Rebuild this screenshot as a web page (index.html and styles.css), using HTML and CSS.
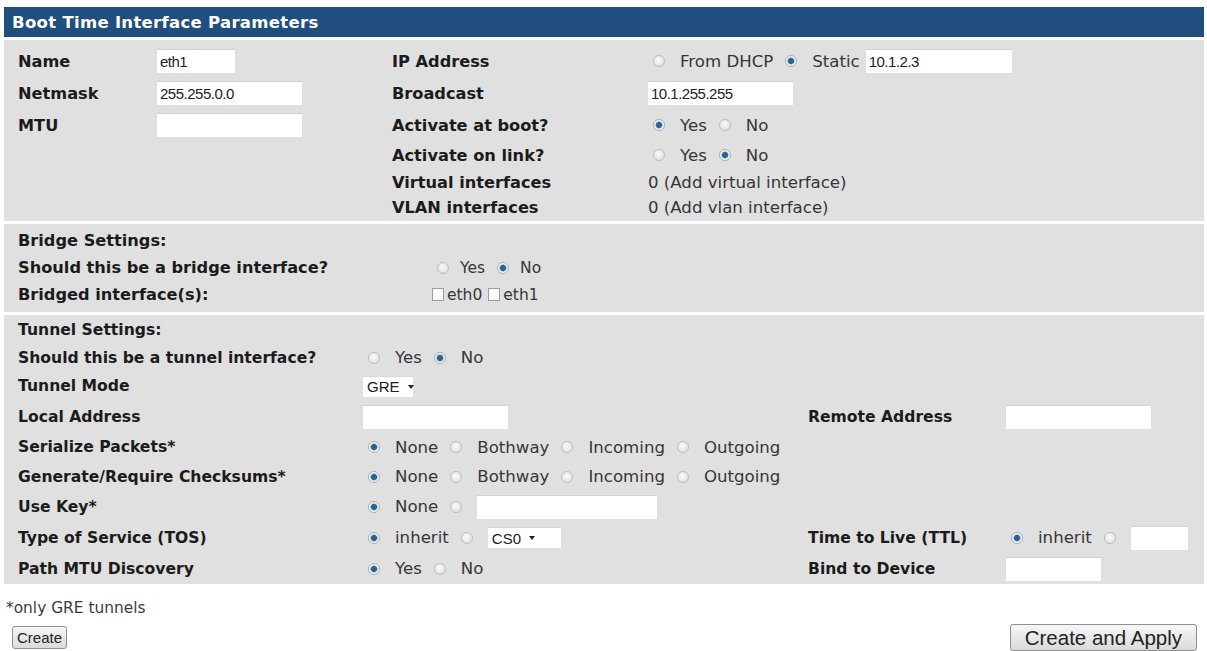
FILE: index.html
```html
<!DOCTYPE html>
<html lang="en">

<head>
	<meta charset="UTF-8">
	<meta name="viewport" content="width=device-width, initial-scale=1.0">
	<title>Boot Time Interface Parameters</title>
	<link rel="stylesheet" href="styles.css">
</head>

<body>
	<form class="page">
		<div class="box">
			<div class="box-title">Boot Time Interface Parameters</div>

			<!-- basic interface settings -->
			<div class="panel panel-main">
				<span class="lbl">Name</span>
				<span><input class="field w-name" type="text" value="eth1"></span>
				<span class="lbl">IP Address</span>
				<span class="val">
					<label class="opt"><input type="radio" name="ip"> From DHCP</label>
					<label class="opt"><input type="radio" name="ip" checked> Static</label>
					<input class="field w-static" type="text" value="10.1.2.3">
				</span>

				<span class="lbl">Netmask</span>
				<span><input class="field w-wide" type="text" value="255.255.0.0"></span>
				<span class="lbl">Broadcast</span>
				<span><input class="field w-wide" type="text" value="10.1.255.255"></span>

				<span class="lbl">MTU</span>
				<span><input class="field w-wide" type="text"></span>
				<span class="lbl">Activate at boot?</span>
				<span class="val">
					<label class="opt"><input type="radio" name="boot" checked> Yes</label>
					<label class="opt"><input type="radio" name="boot"> No</label>
				</span>

				<span></span>
				<span></span>
				<span class="lbl">Activate on link?</span>
				<span class="val">
					<label class="opt"><input type="radio" name="link"> Yes</label>
					<label class="opt"><input type="radio" name="link" checked> No</label>
				</span>

				<span></span>
				<span></span>
				<span class="lbl">Virtual interfaces</span>
				<span class="val text">0 (Add virtual interface)</span>

				<span></span>
				<span></span>
				<span class="lbl">VLAN interfaces</span>
				<span class="val text">0 (Add vlan interface)</span>
			</div>

			<!-- bridge -->
			<div class="panel panel-bridge">
				<span class="lbl">Bridge Settings:</span>
				<span></span>

				<span class="lbl">Should this be a bridge interface?</span>
				<span class="val">
					<label class="opt"><input type="radio" name="bridge"> Yes</label>
					<label class="opt"><input type="radio" name="bridge" checked> No</label>
				</span>

				<span class="lbl">Bridged interface(s):</span>
				<span class="val">
					<label class="chk"><input type="checkbox">eth0</label>
					<label class="chk"><input type="checkbox">eth1</label>
				</span>
			</div>

			<!-- tunnel -->
			<div class="panel panel-tunnel">
				<span class="lbl span-all">Tunnel Settings:</span>

				<span class="lbl">Should this be a tunnel interface?</span>
				<span class="val span-rest">
					<label class="opt"><input type="radio" name="tunnel"> Yes</label>
					<label class="opt"><input type="radio" name="tunnel" checked> No</label>
				</span>

				<span class="lbl">Tunnel Mode</span>
				<span class="val span-rest"><span class="select w-gre">GRE<i class="caret"></i></span></span>

				<span class="lbl">Local Address</span>
				<span><input class="field w-wide" type="text"></span>
				<span class="lbl">Remote Address</span>
				<span><input class="field w-wide" type="text"></span>

				<span class="lbl">Serialize Packets*</span>
				<span class="val span-rest">
					<label class="opt"><input type="radio" name="ser" checked> None</label>
					<label class="opt"><input type="radio" name="ser"> Bothway</label>
					<label class="opt"><input type="radio" name="ser"> Incoming</label>
					<label class="opt"><input type="radio" name="ser"> Outgoing</label>
				</span>

				<span class="lbl">Generate/Require Checksums*</span>
				<span class="val span-rest">
					<label class="opt"><input type="radio" name="csum" checked> None</label>
					<label class="opt"><input type="radio" name="csum"> Bothway</label>
					<label class="opt"><input type="radio" name="csum"> Incoming</label>
					<label class="opt"><input type="radio" name="csum"> Outgoing</label>
				</span>

				<span class="lbl">Use Key*</span>
				<span class="val span-rest">
					<label class="opt"><input type="radio" name="key" checked> None</label>
					<label class="opt"><input type="radio" name="key"></label>
					<input class="field w-key" type="text">
				</span>

				<span class="lbl">Type of Service (TOS)</span>
				<span class="val">
					<label class="opt"><input type="radio" name="tos" checked> inherit</label>
					<label class="opt"><input type="radio" name="tos"></label>
					<span class="select w-cs">CS0<i class="caret"></i></span>
				</span>
				<span class="lbl">Time to Live (TTL)</span>
				<span class="val">
					<label class="opt"><input type="radio" name="ttl" checked> inherit</label>
					<label class="opt"><input type="radio" name="ttl"></label>
					<input class="field w-ttl" type="text">
				</span>

				<span class="lbl">Path MTU Discovery</span>
				<span class="val">
					<label class="opt"><input type="radio" name="pmtu" checked> Yes</label>
					<label class="opt"><input type="radio" name="pmtu"> No</label>
				</span>
				<span class="lbl">Bind to Device</span>
				<span><input class="field w-bind" type="text"></span>
			</div>
		</div>

		<p class="note">*only GRE tunnels</p>
		<div class="actions">
			<button class="btn" type="submit">Create</button>
			<button class="btn btn-big" type="submit">Create and Apply</button>
		</div>
	</form>
</body>

</html>
```

FILE: styles.css
```css
* {
	margin: 0;
	padding: 0;
	box-sizing: border-box;
}

body {
	font-family: "DejaVu Sans", Verdana, sans-serif;
	color: #1b1b1b;
	background: #fff;
}

.page {
	padding: 7px 2px 0 4px;
}

.box {
	width: 1200px;
	display: flex;
	flex-direction: column;
	gap: 3px;
}

.box-title {
	height: 30px;
	background: #1f4e7f;
	color: #fff;
	font-weight: bold;
	font-size: 16.5px;
	letter-spacing: 0.3px;
	padding-left: 8px;
	display: flex;
	align-items: center;
}

.panel {
	display: grid;
	align-items: center;
	background: #e0e0e0;
	padding-left: 14px;
}

.panel-main {
	grid-template-columns: 139px 235px 256px 1fr;
	grid-template-rows: 32px 32px 32px 28px 26px 25px;
	padding: 5px 0 1px 14px;
}

.panel-main .lbl {
	font-size: 16.2px;
}

.panel-bridge {
	grid-template-columns: 414px 1fr;
	grid-template-rows: 27px 27px 27px;
	padding: 3px 0 4px 14px;
}

.panel-bridge .lbl {
	font-size: 16.2px;
}

.panel-bridge .val {
	font-size: 15.5px;
}

.panel-bridge .opt input {
	margin-right: 11px;
}

.panel-tunnel {
	grid-template-columns: 345px 445px 198px 1fr;
	grid-template-rows: 28px 27px 30px 31px 30px 29px 31px 31px 31px;
	padding: 1px 0 0 14px;
}

.span-all {
	grid-column: 1 / -1;
}

.span-rest {
	grid-column: 2 / -1;
}

.lbl {
	font-weight: bold;
	font-size: 15.6px;
	white-space: nowrap;
}

.val {
	display: flex;
	align-items: center;
	font-size: 16.6px;
	color: #363636;
	white-space: nowrap;
}

.opt {
	display: flex;
	align-items: center;
}

.opt + .opt {
	margin-left: 7px;
}

.opt input {
	appearance: none;
	width: 12px;
	height: 12px;
	margin: 0 15px 0 5px;
	border-radius: 50%;
	border: 1px solid #bdbdbd;
	background: radial-gradient(circle at 45% 40%, #fbfbfb, #dadada);
}

.opt input:checked {
	border-color: #a4b0bb;
	background: radial-gradient(circle, #2a6393 0 2.6px, #8fabc3 3.2px, #f2f5f8 4px);
}

.chk {
	display: flex;
	align-items: center;
	margin-right: 6px;
}

.chk input {
	appearance: none;
	width: 12px;
	height: 13px;
	margin-right: 3px;
	border: 1px solid #9c9c9c;
	background: #fbfbfb;
}

.field {
	height: 24px;
	border: none;
	border-top: 1px solid #d2d2d2;
	background: #fff;
	font-family: "Liberation Sans", Arial, sans-serif;
	font-size: 15px;
	letter-spacing: -0.5px;
	color: #222;
	padding: 0 3px;
	outline: none;
}

.opt + .field,
.opt + .select {
	margin-left: 6px;
}

.w-name {
	width: 78px;
}

.w-wide {
	width: 145px;
}

.w-static {
	width: 146px;
}

.w-key {
	width: 180px;
	margin-left: 0 !important;
}

.w-ttl {
	width: 57px;
	margin-left: 0 !important;
}

.w-bind {
	width: 95px;
}

.select {
	display: flex;
	align-items: center;
	height: 21px;
	background: #fff;
	border-top: 1px solid #d8d8d8;
	font-family: "Liberation Sans", Arial, sans-serif;
	font-size: 15px;
	color: #222;
	padding-left: 4px;
}

.w-gre {
	width: 50px;
}

.w-cs {
	width: 73px;
	margin-left: 0 !important;
}

.caret {
	width: 0;
	height: 0;
	margin-left: 8px;
	border-left: 3.5px solid transparent;
	border-right: 3.5px solid transparent;
	border-top: 4px solid #222;
}

.note {
	margin-top: 14px;
	font-size: 15.4px;
	line-height: 20px;
	color: #3c3c3c;
	padding-left: 2px;
}

.actions {
	display: flex;
	justify-content: space-between;
	align-items: center;
	margin-top: 6px;
	padding: 0 8px 0 8px;
}

.btn {
	height: 23px;
	padding: 0 4px;
	font-family: "Liberation Sans", Arial, sans-serif;
	font-size: 15px;
	color: #222;
	border: 1px solid #8f8f8f;
	border-radius: 3px;
	background: linear-gradient(#f7f7f7, #dadada);
}

.btn-big {
	height: 27px;
	padding: 0 14px;
	font-size: 20.5px;
}
```
